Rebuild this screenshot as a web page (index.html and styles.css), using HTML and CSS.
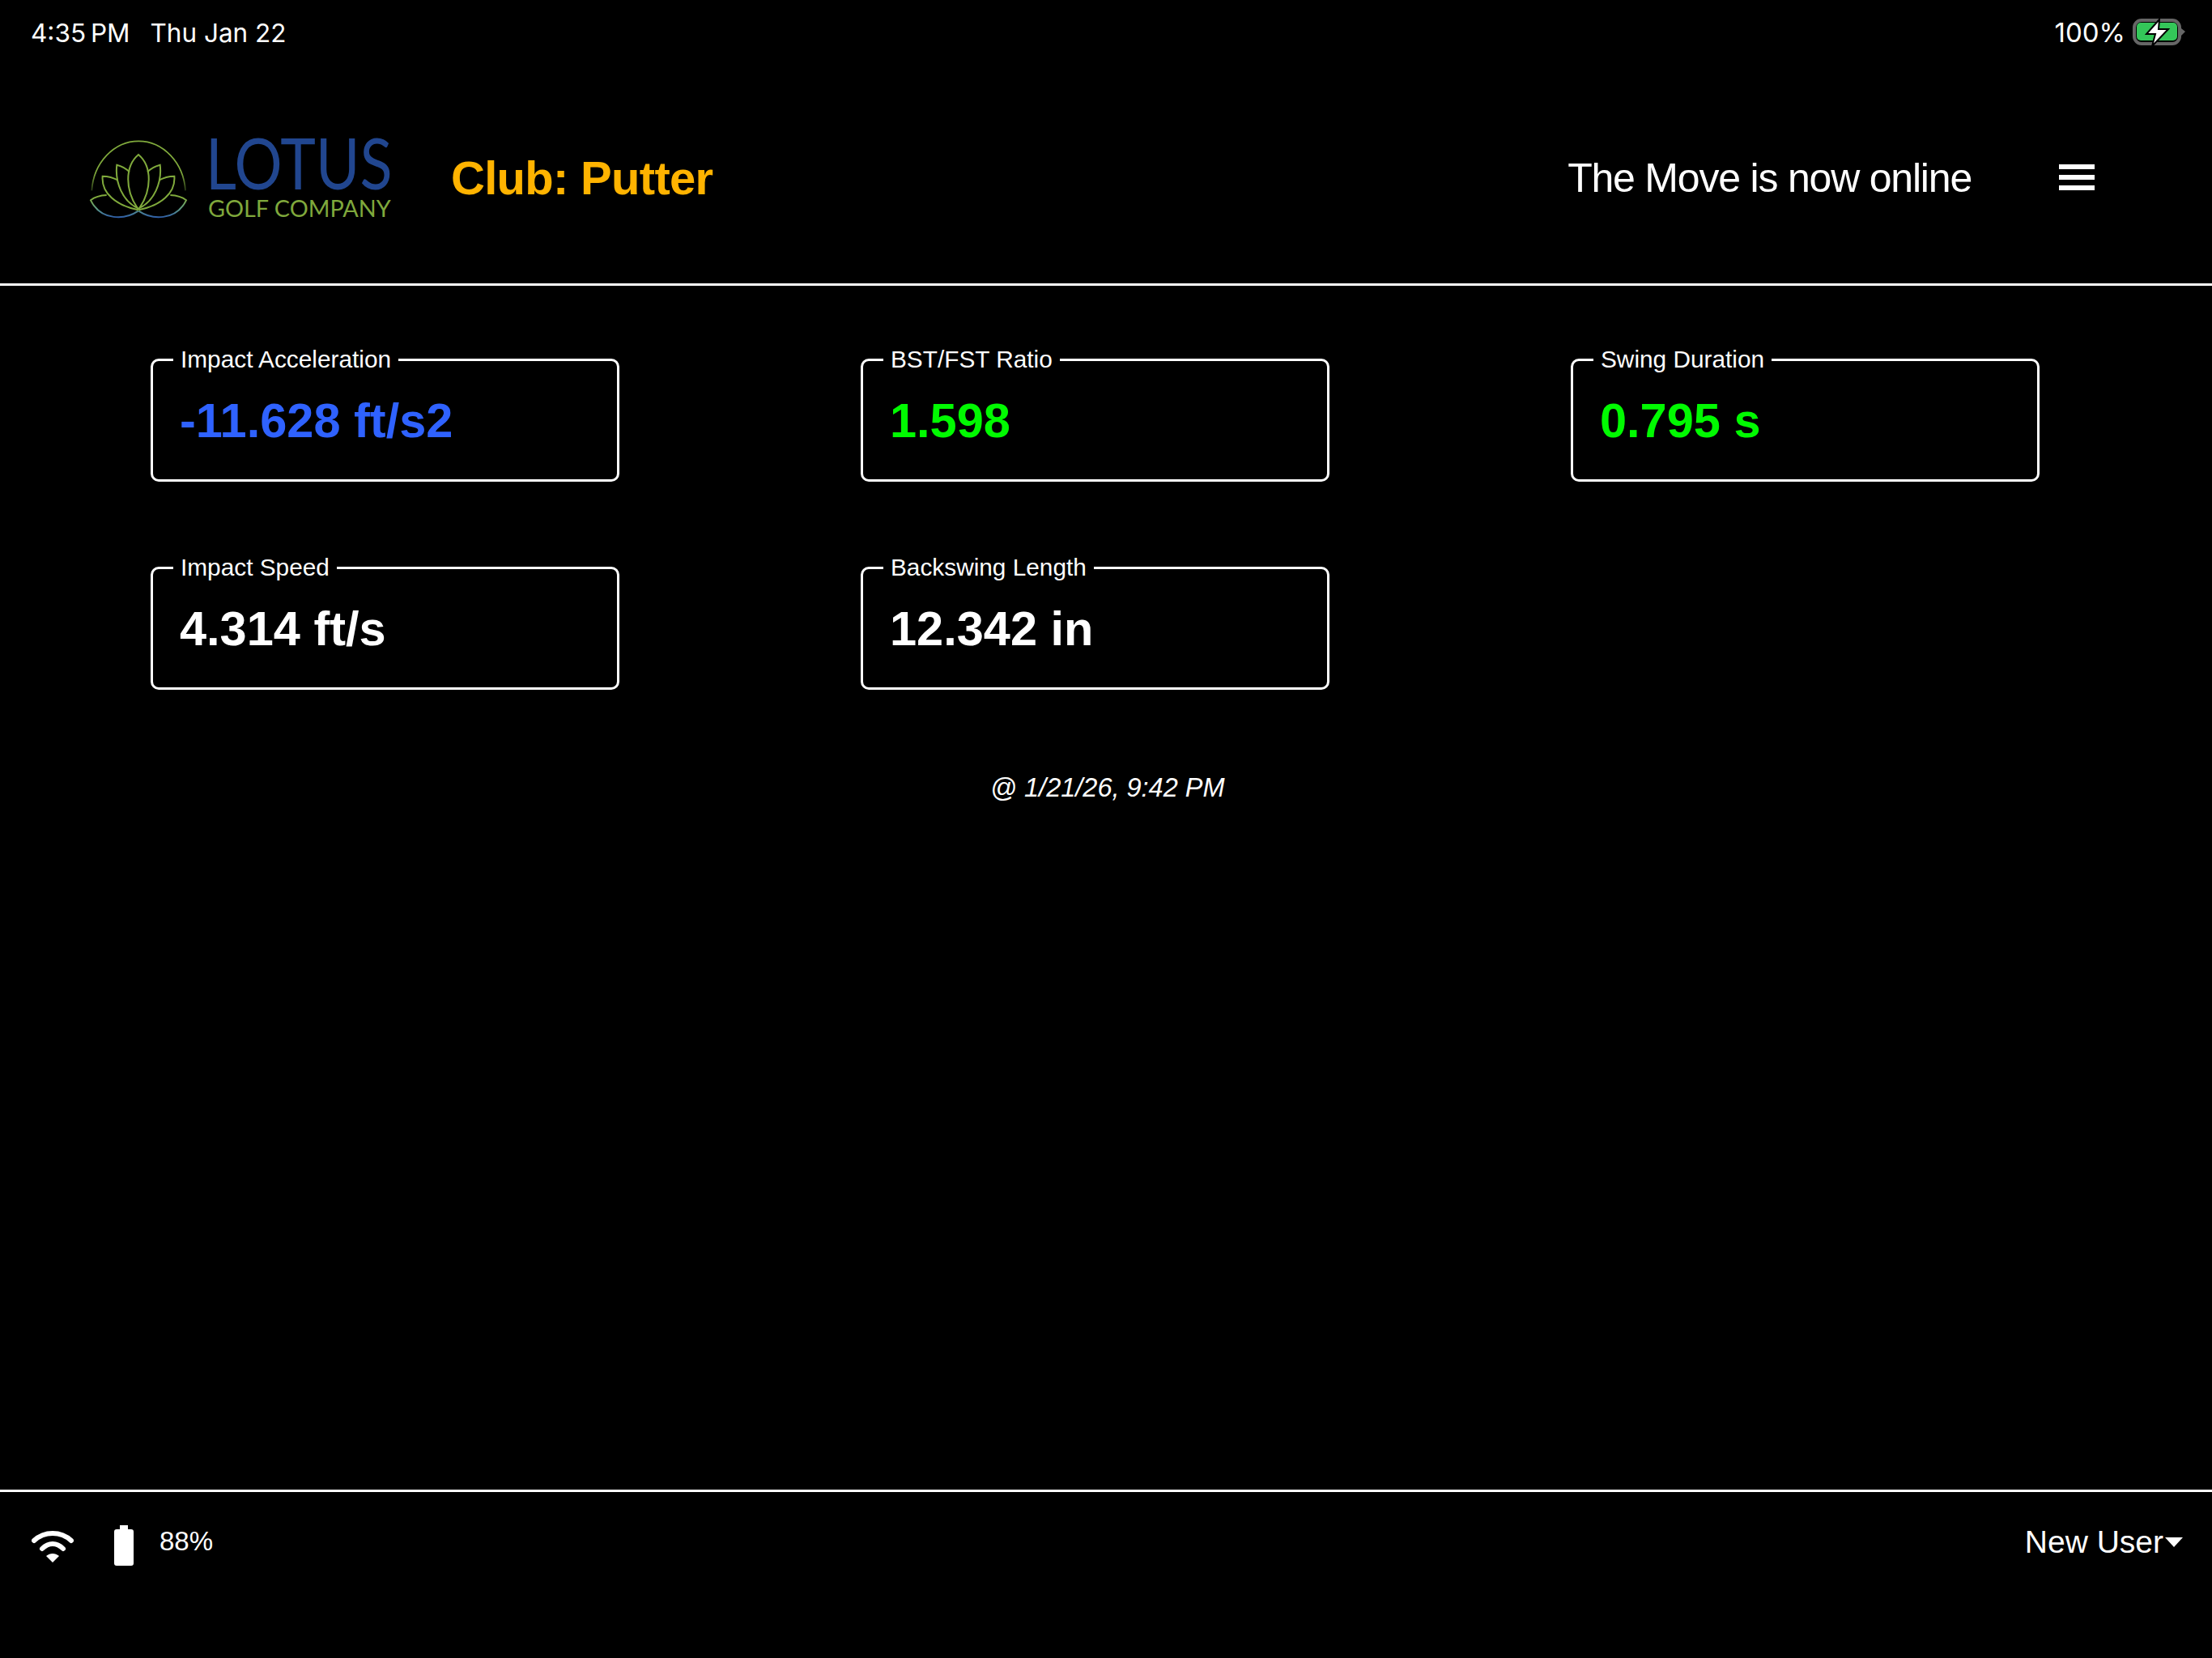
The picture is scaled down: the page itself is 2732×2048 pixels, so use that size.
FILE: index.html
```html
<!DOCTYPE html>
<html lang="en">
  <head>
    <meta charset="UTF-8" />
    <title>Lotus Golf</title>
    <link rel="stylesheet" href="styles.css">
  </head>
  <body>
    <div class="statusBar">
      <div class="statusLeft">
        <span class="clock">4:35 PM</span>
        <span>Thu Jan 22</span>
      </div>
      <div class="statusRight">
        <span>100%</span>
        <svg class="iosBattery" width="66" height="36" viewBox="0 0 66 36">
          <rect x="2" y="3" width="56" height="29" rx="9" fill="none" stroke="#666" stroke-width="4" />
          <rect x="5" y="6" width="50" height="22" rx="5" fill="#34c759" />
          <path d="M60 13 L65 17 L60 22 Z" fill="#666" />
          <path d="M33 2 L17 20 L28 20 L24 35 L44 14 L32 14 Z" fill="#fff" stroke="#000" stroke-width="2" />
        </svg>
      </div>
    </div>

    <div class="header">
      <div class="logo">
        <svg class="lotus" width="124" height="104" viewBox="90 85 372 312">
          <defs>
            <linearGradient id="fadeArc" gradientUnits="userSpaceOnUse" x1="0" y1="90" x2="0" y2="300">
              <stop offset="0.65" stop-color="#80aa3c" />
              <stop offset="1" stop-color="#1c2a10" />
            </linearGradient>
            <linearGradient id="leafGrad" gradientUnits="userSpaceOnUse" x1="0" y1="300" x2="0" y2="390">
              <stop offset="0.2" stop-color="#80aa3c" />
              <stop offset="0.65" stop-color="#5d9a86" />
              <stop offset="1" stop-color="#2f5ea8" />
            </linearGradient>
            <g id="halfLotus" fill="none" stroke-width="6">
              <path stroke="url(#leafGrad)" d="M272 366 C225 398 135 405 96 326 C110 315 130 308 155 307" />
              <path stroke="#80aa3c" d="M272 362 C190 345 135 300 140 237 C160 237 180 242 197 252" />
              <path stroke="#80aa3c" d="M270 355 C215 330 185 260 193 195 C212 200 228 208 240 222" />
            </g>
          </defs>
          <path d="M100 290 A174 198 0 0 1 447 290" fill="none" stroke="url(#fadeArc)" stroke-width="5" />
          <path d="M273 157 C222 200 222 290 273 360 C324 290 324 200 273 157 Z" fill="none" stroke="#80aa3c" stroke-width="6" />
          <use href="#halfLotus" />
          <use href="#halfLotus" transform="translate(546 0) scale(-1 1)" />
        </svg>
        <div class="logoText">
          <div class="logoName">LOTUS</div>
          <div class="logoSub">GOLF COMPANY</div>
        </div>
      </div>
      <div class="club">Club: Putter</div>
      <div class="online">The Move is now online</div>
      <div class="menu">
        <span></span>
        <span></span>
        <span></span>
      </div>
    </div>

    <div class="main">
      <div class="stats">
        <fieldset class="stat">
          <legend>Impact Acceleration</legend>
          <div class="value blue">-11.628 ft/s2</div>
        </fieldset>
        <fieldset class="stat">
          <legend>BST/FST Ratio</legend>
          <div class="value green">1.598</div>
        </fieldset>
        <fieldset class="stat">
          <legend>Swing Duration</legend>
          <div class="value green">0.795 s</div>
        </fieldset>
        <fieldset class="stat">
          <legend>Impact Speed</legend>
          <div class="value">4.314 ft/s</div>
        </fieldset>
        <fieldset class="stat">
          <legend>Backswing Length</legend>
          <div class="value">12.342 in</div>
        </fieldset>
      </div>
      <div class="stamp">@ 1/21/26, 9:42 PM</div>
    </div>

    <div class="footer">
      <div class="device">
        <svg class="wifi" width="52" height="40" viewBox="0 0 52 40">
          <path d="M3 13 C16 1 36 1 49 13" fill="none" stroke="#fff" stroke-width="6" stroke-linecap="round" />
          <path d="M13 23 C21 15 31 15 39 23" fill="none" stroke="#fff" stroke-width="6" stroke-linecap="round" />
          <path d="M18 32 C23 28 29 28 34 32 L26 40 Z" fill="#fff" />
        </svg>
        <svg class="devBattery" width="24" height="50" viewBox="0 0 24 50">
          <path d="M7 0 H17 V5 H21 Q24 5 24 8 V47 Q24 50 21 50 H3 Q0 50 0 47 V8 Q0 5 3 5 H7 Z" fill="#fff" />
        </svg>
        <span class="level">88%</span>
      </div>
      <div class="user">New User<span class="caret"></span></div>
    </div>
  </body>
</html>
```

FILE: styles.css
```css
* {
  box-sizing: border-box;
}

body {
  margin: 0;
  width: 2732px;
  height: 2048px;
  display: flex;
  flex-direction: column;
  background-color: #000;
  color: #fff;
  font-family: "Liberation Sans", Arial, sans-serif;
}

.statusBar {
  height: 80px;
  padding: 0 32px 0 38px;
  display: flex;
  align-items: center;
  justify-content: space-between;
  font-family: Inter, "Liberation Sans", sans-serif;
  font-size: 31.5px;
}

.statusLeft {
  display: flex;
  gap: 25px;
}

.clock {
  word-spacing: -3px;
}

.statusRight {
  display: flex;
  align-items: center;
  gap: 9px;
  font-size: 33px;
}

.header {
  height: 273px;
  padding: 8px 145px 0 110px;
  display: flex;
  align-items: center;
  border-bottom: 3px solid #fff;
}

.logo {
  display: flex;
  align-items: flex-start;
  gap: 23px;
}

.logoText {
  width: 226px;
  margin-top: 3px;
}

.logoName {
  margin-left: -3px;
  font-family: Lato, sans-serif;
  font-size: 87px;
  line-height: 62px;
  height: 62px;
  color: #21468f;
  transform: scaleX(0.85);
  transform-origin: left;
}

.logoSub {
  margin-top: 15px;
  font-family: Lato, sans-serif;
  font-size: 28.8px;
  line-height: 21px;
  color: #7fa83c;
  white-space: nowrap;
}

.club {
  margin-left: 74px;
  font-size: 58px;
  font-weight: bold;
  letter-spacing: -0.7px;
  color: #ffb300;
}

.online {
  margin-left: auto;
  margin-top: 2px;
  font-size: 50px;
  letter-spacing: -1.2px;
}

.menu {
  margin-left: 108px;
  width: 44px;
  display: flex;
  flex-direction: column;
  gap: 7px;
}

.menu span {
  height: 6px;
  background-color: #fff;
}

.main {
  flex: 1;
  padding: 0 0 0 186px;
}

.stats {
  margin-top: 75px;
  display: grid;
  grid-template-columns: repeat(3, 579px);
  column-gap: 298px;
  row-gap: 90px;
}

.stat {
  margin: 0;
  height: 167px;
  padding: 0 0 0 25px;
  border: 3px solid #fff;
  border-radius: 10px;
  min-width: 0;
}

.stat legend {
  padding: 0 9px;
  font-size: 29.8px;
  line-height: 32px;
}

.value {
  margin-top: 25px;
  padding-left: 8px;
  font-size: 59.5px;
  line-height: 70px;
  font-weight: bold;
}

.blue {
  color: #2f62ff;
}

.green {
  color: #00fa00;
}

.stamp {
  margin-top: 103px;
  margin-left: 1037px;
  font-size: 32.5px;
  font-style: italic;
}

.footer {
  height: 208px;
  padding: 40px 36px 0 39px;
  display: flex;
  justify-content: space-between;
  align-items: flex-start;
  border-top: 3px solid #fff;
}

.device {
  display: flex;
  align-items: flex-start;
}

.wifi {
  margin-top: 7px;
}

.devBattery {
  margin-left: 50px;
  margin-top: 1px;
}

.level {
  margin-left: 32px;
  margin-top: 2px;
  font-size: 33px;
}

.user {
  display: flex;
  align-items: center;
  font-size: 39px;
}

.caret {
  margin-left: 2px;
  border-left: 11px solid transparent;
  border-right: 11px solid transparent;
  border-top: 12px solid #fff;
}
```
